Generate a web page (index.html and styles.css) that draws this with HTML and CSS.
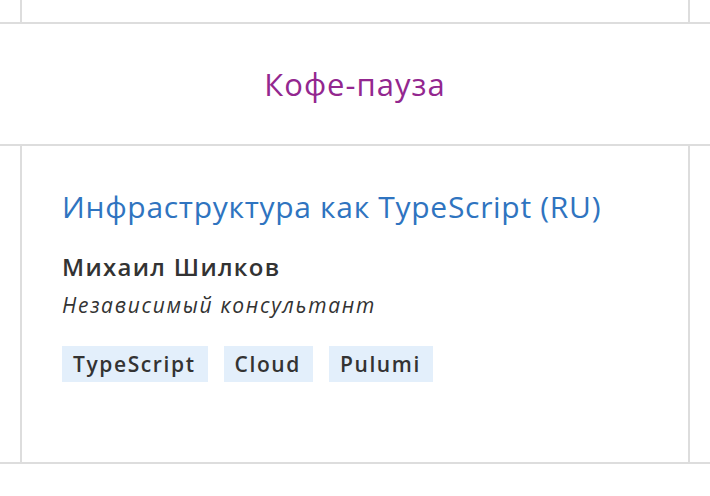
FILE: index.html
```html
<!DOCTYPE html>
<html lang="ru">
<head>
<meta charset="utf-8">
<link rel="stylesheet" href="styles.css">
</head>
<body>
<div class="schedule">
  <div class="row row-top">
    <div class="side"></div>
    <div class="cell"></div>
    <div class="side"></div>
  </div>
  <div class="row row-break">
    <div class="break">Кофе-пауза</div>
  </div>
  <div class="row row-talk">
    <div class="side"></div>
    <div class="cell talk">
      <a class="title">Инфраструктура как TypeScript (RU)</a>
      <div class="speaker">Михаил Шилков</div>
      <div class="company">Независимый консультант</div>
      <div class="tags">
        <span class="tag">TypeScript</span>
        <span class="tag">Cloud</span>
        <span class="tag">Pulumi</span>
      </div>
    </div>
    <div class="side"></div>
  </div>
</div>
</body>
</html>
```

FILE: styles.css
```css
html, body {
  margin: 0;
  padding: 0;
  background: #ffffff;
}
body {
  font-family: "Open Sans", "Noto Sans", sans-serif;
  color: #333333;
}
.schedule {
  display: flex;
  flex-direction: column;
  width: 710px;
}
.row {
  display: flex;
  border-bottom: 2px solid #dddddd;
}
.side {
  width: 20px;
  flex: none;
}
.cell {
  flex: 1;
  border-left: 2px solid #dddddd;
  border-right: 2px solid #dddddd;
}
.row-top {
  height: 22px;
}
.row-break {
  height: 120px;
  align-items: center;
  justify-content: center;
}
.break {
  color: #93278f;
  font-size: 31px;
  letter-spacing: 1px;
}
.row-talk {
  height: 316px;
}
.talk {
  padding: 41px 40px 0 40px;
  display: flex;
  flex-direction: column;
  align-items: flex-start;
}
.title {
  color: #2f74c0;
  font-size: 30px;
  letter-spacing: 0.7px;
  line-height: 40px;
}
.speaker {
  margin-top: 24px;
  font-size: 24px;
  font-weight: 600;
  letter-spacing: 1.3px;
  line-height: 32px;
}
.company {
  margin-top: 8px;
  font-size: 21px;
  font-style: italic;
  letter-spacing: 1.7px;
  line-height: 28px;
}
.tags {
  margin-top: 27px;
  display: flex;
  gap: 16px;
}
.tag {
  background: #e3effb;
  font-size: 21px;
  font-weight: 600;
  letter-spacing: 1.6px;
  line-height: 36px;
  padding: 0 12px 0 11px;
}
```
